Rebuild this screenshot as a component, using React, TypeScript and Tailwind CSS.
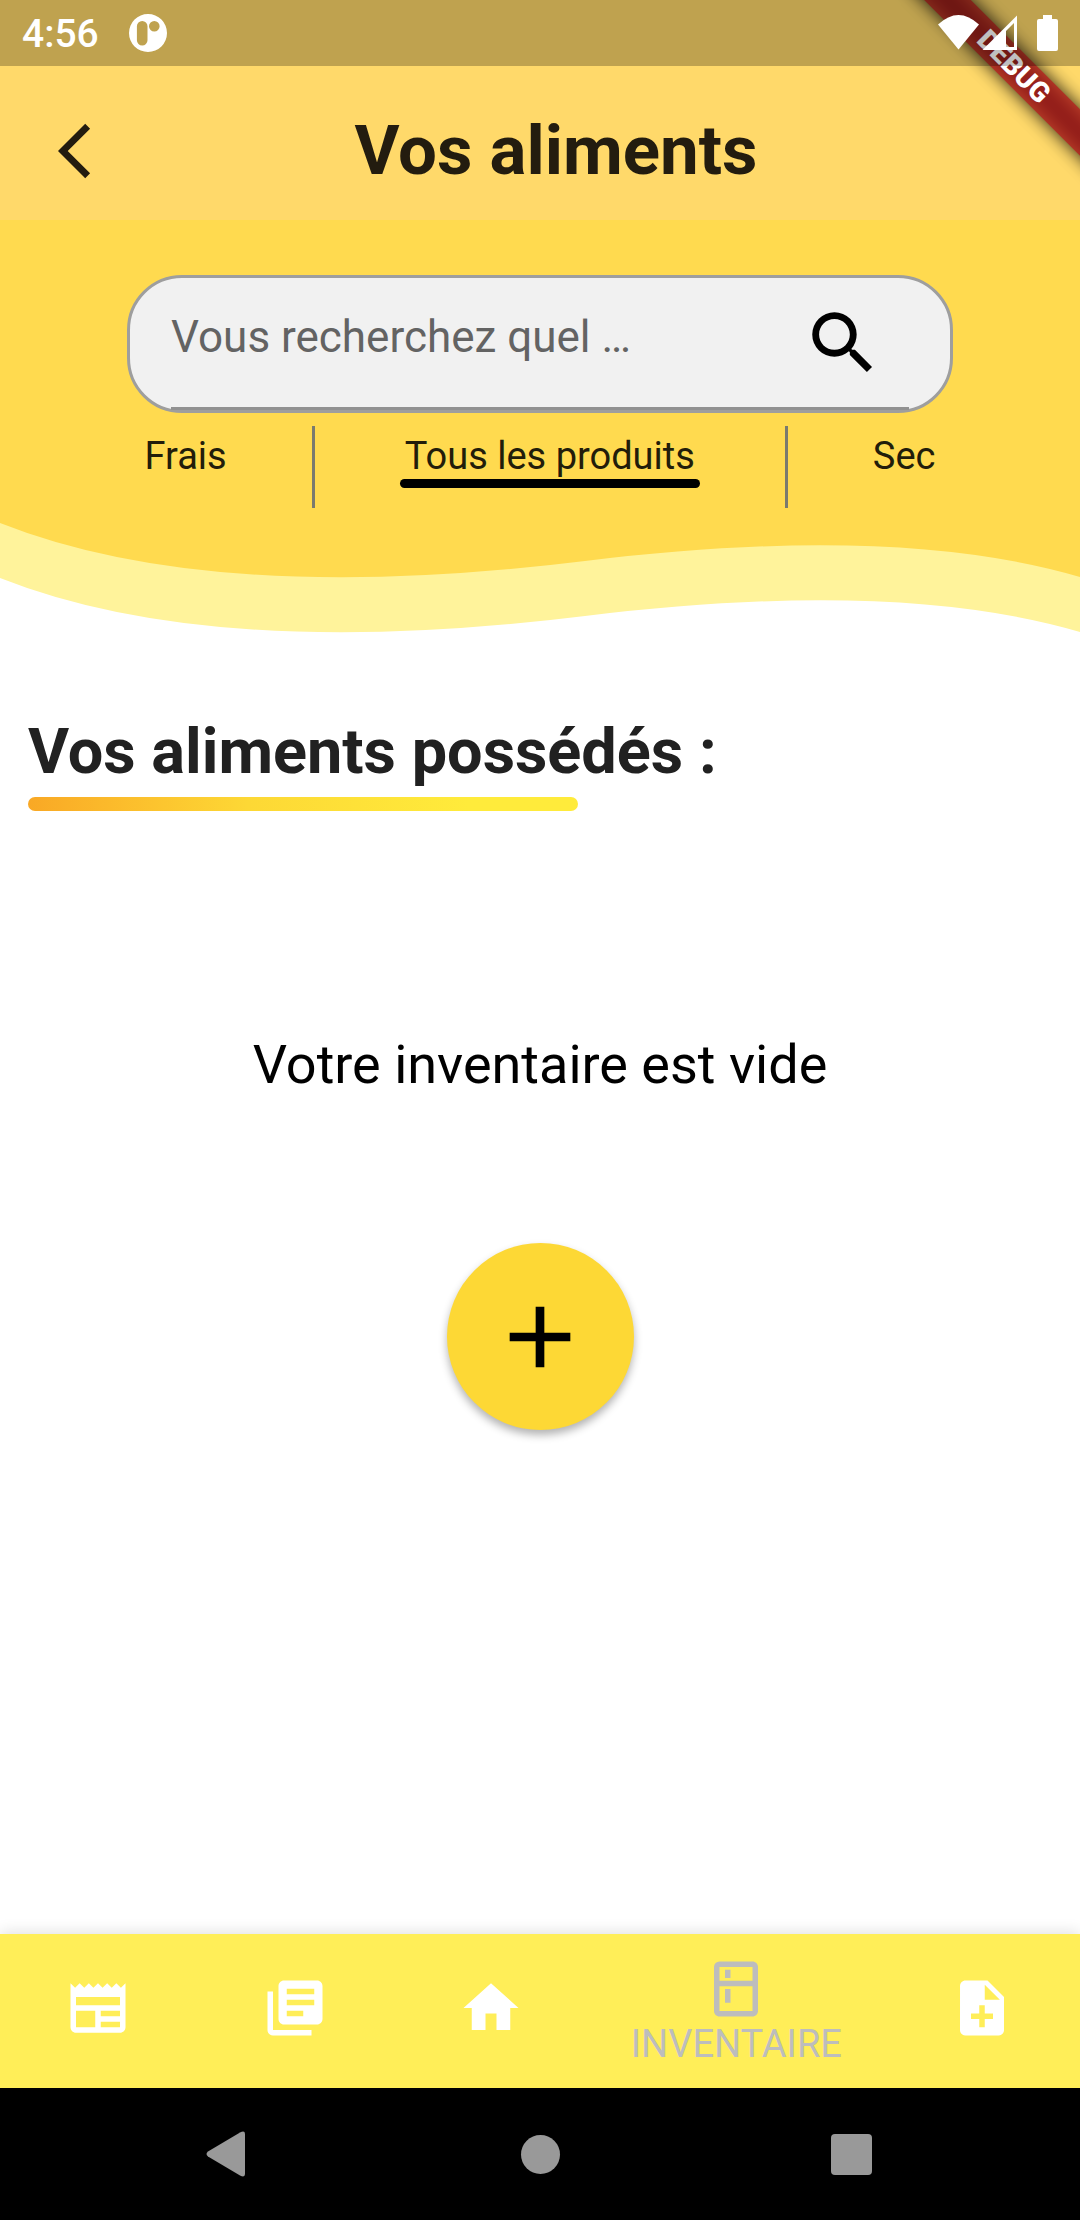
import type { ComponentType } from "react";
import {
  MdAdd,
  MdArrowBackIos,
  MdHome,
  MdLibraryBooks,
  MdNewspaper,
  MdNoteAdd,
  MdOutlineKitchen,
  MdSearch,
} from "react-icons/md";

type NavItem = {
  name: string;
  Icon: ComponentType<{ className?: string }>;
  active?: boolean;
};

const navItems: NavItem[] = [
  { name: "Actualités", Icon: MdNewspaper },
  { name: "Recettes", Icon: MdLibraryBooks },
  { name: "Accueil", Icon: MdHome },
  { name: "INVENTAIRE", Icon: MdOutlineKitchen, active: true },
  { name: "Ajouter", Icon: MdNoteAdd },
];

function DebugRibbon() {
  return (
    <div className="pointer-events-none absolute top-0 right-0 z-10 size-[220px] overflow-hidden">
      <div className="absolute top-[50px] left-[14px] h-[33px] w-[280px] rotate-45">
        <div className="absolute inset-0 bg-black/85 blur-[9px]" />
        <div className="absolute inset-0 flex items-center justify-center bg-[#b71c1c]/75 text-[28px] leading-none font-black text-white">
          DEBUG
        </div>
      </div>
    </div>
  );
}

function StatusBar() {
  return (
    <div className="relative z-20 flex h-[66px] items-center bg-black/25 pr-[22px] pl-[22px] text-white">
      <span className="pt-0.5 text-[39px] leading-[64px] font-medium">4:56</span>
      <svg viewBox="0 0 38 38" className="ml-[30px] size-[38px]" aria-hidden="true">
        <path
          fill="currentColor"
          fillRule="evenodd"
          d="M19 0a19 19 0 1 1 0 38a19 19 0 0 1 0-38zM13.200 7a5.300 5.300 0 0 0-5.300 5.300v14a5.300 5.300 0 0 0 10.600 0v-14a5.300 5.300 0 0 0-5.300-5.300zM25.300 7a5.300 5.300 0 1 0 0 10.600a5.300 5.300 0 0 0 0-10.600z"
        />
      </svg>
      <svg viewBox="0 0 120 36" className="ml-auto h-9 w-[120px]" aria-hidden="true">
        <path fill="currentColor" d="M0 9.500Q20.500-9.500 41 9.500L20.500 34.500z" />
        <path
          fill="currentColor"
          fillRule="evenodd"
          d="M79 .5V35H44.500zM76 8L68 16V32H76z"
        />
        <path
          fill="currentColor"
          d="M105 0h9v4h4a2 2 0 0 1 2 2v28a2 2 0 0 1-2 2h-17a2 2 0 0 1-2-2v-28a2 2 0 0 1 2-2h4z"
        />
      </svg>
    </div>
  );
}

function Header() {
  return (
    <header className="bg-[#ffd96a]">
      <StatusBar />
      <div className="flex h-[154px] items-center pt-4">
        <button type="button" aria-label="Retour" className="w-[154px] pl-[58px] text-[#231c0f]">
          <MdArrowBackIos className="size-[66px]" />
        </button>
        <h1 className="flex-1 pr-[122px] text-center text-[69px] leading-[82px] font-bold text-[#231c0f]">
          Vos aliments
        </h1>
      </div>
    </header>
  );
}

function Divider() {
  return <div className="h-[82px] w-[3px] bg-[#7a7a6e]" />;
}

function Filters() {
  return (
    <section className="bg-[#ffda4f] pt-[55px] pb-3">
      <form
        className="mx-[127px] h-[138px] rounded-[55px] border-3 border-[#9e9e9e] bg-[#f1f1f1] px-[41px]"
        onSubmit={(event) => event.preventDefault()}
      >
        <div className="flex h-full items-center border-b-3 border-[#919191]">
          <input
            type="search"
            aria-label="Rechercher un produit"
            placeholder="Vous recherchez quel …"
            className="h-full min-w-0 flex-1 bg-transparent pb-3 text-[44px] text-[#212121] outline-none placeholder:text-[#636363]"
          />
          <button type="submit" aria-label="Rechercher" className="mr-[25px] text-black">
            <MdSearch className="size-[82px]" />
          </button>
        </div>
      </form>
      <div className="mt-[13px] flex justify-center gap-[85px] text-[38px] leading-[45px] text-[#221d0a]">
        <button type="button" className="self-start pt-2">
          Frais
        </button>
        <Divider />
        <button type="button" aria-pressed="true" className="self-start pt-2">
          <span className="block px-[5px]">Tous les produits</span>
          <span className="block h-[9px] rounded-full bg-black" />
        </button>
        <Divider />
        <button type="button" className="self-start pt-2">
          Sec
        </button>
      </div>
    </section>
  );
}

function Wave() {
  return (
    <svg
      viewBox="0 0 1080 114"
      preserveAspectRatio="none"
      className="block h-[114px] w-full"
      aria-hidden="true"
    >
      <path fill="#fff39b" d="M0 0V58Q212 142 585 96Q896 58 1080 112V0z" />
      <path fill="#ffda4f" d="M0 0V3Q212 87 585 41Q896 3 1080 57V0z" />
    </svg>
  );
}

function Inventory() {
  return (
    <main className="flex-1 pt-[81px]">
      <h2 className="px-7 text-[63px] leading-[74px] font-bold text-[#212121]">
        Vos aliments possédés :
      </h2>
      <div className="mt-2 ml-7 h-[14px] w-[550px] rounded-full bg-linear-to-r from-[#f9a825] via-[#fdd835] via-40% to-[#ffeb3b] to-80%" />
      <p className="mt-[222px] text-center text-[54px] leading-[64px] text-black">
        Votre inventaire est vide
      </p>
      <button
        type="button"
        aria-label="Ajouter un aliment"
        className="mx-auto mt-[146px] flex size-[187px] items-center justify-center rounded-full bg-[#fdd835] text-black shadow-[0_5px_8px_rgba(0,0,0,0.3)]"
      >
        <MdAdd className="size-[104px]" />
      </button>
    </main>
  );
}

function BottomNav() {
  return (
    <nav className="flex h-[154px] bg-[#ffee58] shadow-[0_-2px_14px_rgba(0,0,0,0.12)]">
      {navItems.map(({ name, Icon, active }) =>
        active ? (
          <button
            key={name}
            type="button"
            aria-current="page"
            className="flex min-w-0 flex-[3] flex-col items-center justify-center text-[#bdbdbd]"
          >
            <Icon className="size-[66px]" />
            <span className="text-[38px] leading-[45px]">{name}</span>
          </button>
        ) : (
          <button
            key={name}
            type="button"
            aria-label={name}
            className="flex min-w-0 flex-[2] items-center justify-center pb-1.5 text-white"
          >
            <Icon className="size-[66px]" />
          </button>
        ),
      )}
    </nav>
  );
}

function SystemNav() {
  return (
    <div className="flex h-[132px] items-center justify-between bg-black pr-[208px] pl-[206px] text-[#999999]">
      <button type="button" aria-label="Précédent">
        <svg viewBox="0 0 44 46" className="h-[46px] w-11" aria-hidden="true">
          <path
            fill="currentColor"
            d="M2 20.500L34 1.500Q39-1 39 3V43Q39 47 34 44.500L2 25.500Q-1 23 2 20.500z"
          />
        </svg>
      </button>
      <button type="button" aria-label="Écran d'accueil" className="size-[39px] rounded-full bg-current" />
      <button type="button" aria-label="Applications récentes" className="size-[41px] rounded-sm bg-current" />
    </div>
  );
}

export default function App() {
  return (
    <div className="relative flex min-h-screen flex-col overflow-hidden bg-white font-['Roboto',sans-serif]">
      <DebugRibbon />
      <Header />
      <Filters />
      <Wave />
      <Inventory />
      <BottomNav />
      <SystemNav />
    </div>
  );
}
